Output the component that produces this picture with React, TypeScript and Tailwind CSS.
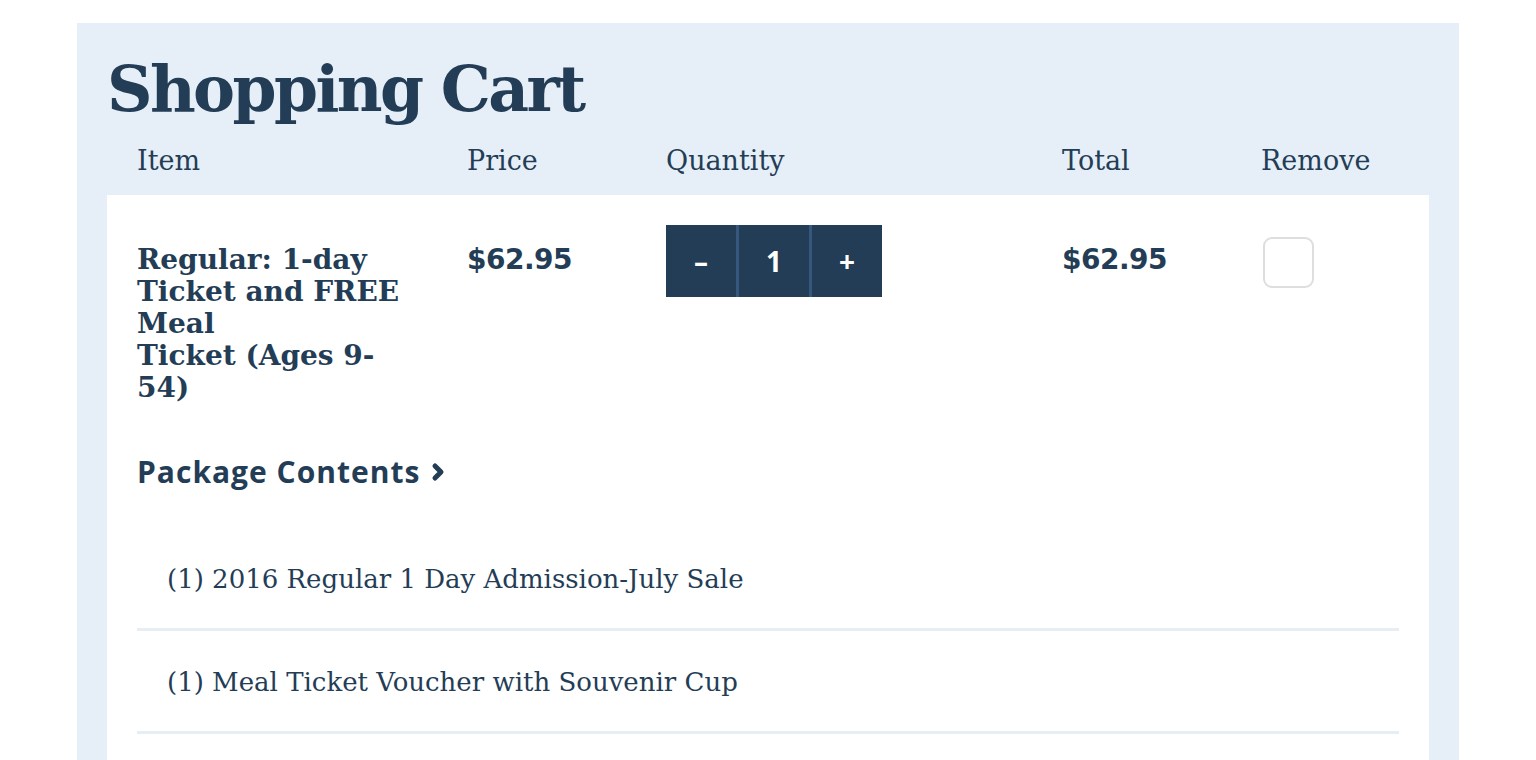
import { ChevronRight } from "lucide-react";

const slab = "font-['DejaVu_Serif',serif]";
const sans = "font-['Open_Sans',sans-serif]";
const wide = "font-['DejaVu_Sans',sans-serif]";

const contents = [
  "(1) 2016 Regular 1 Day Admission-July Sale",
  "(1) Meal Ticket Voucher with Souvenir Cup",
];

export default function App() {
  return (
    <div className="h-[760px] overflow-hidden bg-white pt-[23px] pl-[77px] pr-[77px] text-[#243d56]">
      <div className="bg-[#e6eff7] px-[30px] pt-[22px] h-[800px]">
        <h1 className={`${slab} text-[63px] font-bold leading-[88px] tracking-[-2.6px]`}>Shopping Cart</h1>

        <div className={`${slab} flex text-[27px] font-light leading-[30px] pl-[30px] pt-[13px] pb-[19px]`}>
          <div className="w-[330px]">Item</div>
          <div className="w-[199px]">Price</div>
          <div className="w-[396px]">Quantity</div>
          <div className="w-[199px]">Total</div>
          <div>Remove</div>
        </div>

        <div className="bg-white px-[30px] pt-[30px] min-h-[700px]">
          <div className="flex items-start">
            <div className={`${slab} w-[330px] mt-[19px] text-[28px] font-bold leading-[32px]`}>
              <span className="block whitespace-nowrap">Regular: 1-day</span>
              <span className="block whitespace-nowrap">Ticket and FREE</span>
              <span className="block whitespace-nowrap">Meal</span>
              <span className="block whitespace-nowrap">Ticket (Ages 9-</span>
              <span className="block whitespace-nowrap">54)</span>
            </div>
            <div className={`${wide} w-[199px] mt-[19px] text-[28px] font-bold leading-[32px] tracking-[-0.5px]`}>$62.95</div>
            <div className="w-[396px]">
              <div className={`${sans} flex h-[72px] w-[216px] bg-[#243d56] text-white text-[28px] font-bold`}>
                <button className="flex w-[70px] items-center justify-center">–</button>
                <div className="w-[3px] bg-[#36587f]" />
                <div className="flex w-[70px] items-center justify-center">1</div>
                <div className="w-[3px] bg-[#36587f]" />
                <button className="flex w-[70px] items-center justify-center">+</button>
              </div>
            </div>
            <div className={`${wide} w-[199px] mt-[19px] text-[28px] font-bold leading-[32px] tracking-[-0.5px]`}>$62.95</div>
            <div className="pt-[12px] pl-[2px]">
              <div className="h-[51px] w-[51px] rounded-[9px] border-2 border-[#dedede] bg-white" />
            </div>
          </div>

          <button className={`${sans} mt-[52px] flex items-center gap-[6px] text-[30px] font-bold leading-[32px] tracking-[1px]`}>
            Package Contents
            <ChevronRight className="h-[24px] w-[24px]" strokeWidth={5} />
          </button>

          <ul className="mt-[40px]">
            {contents.map((c) => (
              <li key={c} className={`${slab} border-b-[3px] border-[#e6edf3] pl-[30px] pt-[35px] pb-[33px] text-[26px] font-light leading-[32px]`}>
                {c}
              </li>
            ))}
          </ul>
        </div>
      </div>
    </div>
  );
}
